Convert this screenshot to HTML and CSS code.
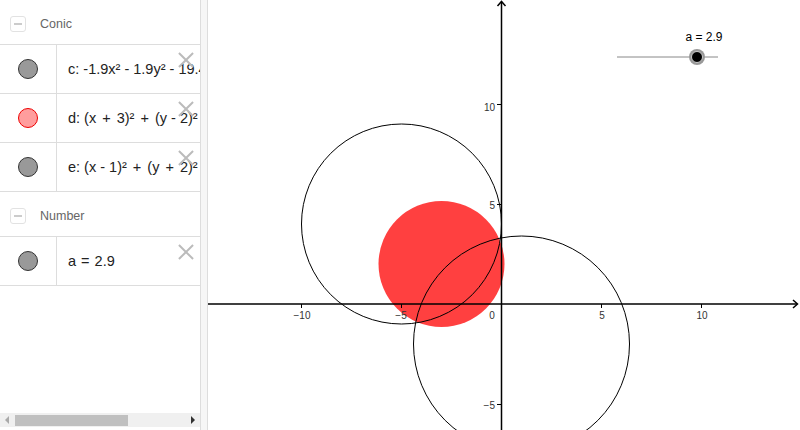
FILE: index.html
```html
<!DOCTYPE html>
<html lang="en">
<head>
    <meta charset="UTF-8">
    <title>Conic circles</title>
    <link rel="stylesheet" href="styles.css">
</head>
<body>

<div class="app">
    <!-- Algebra view -->
    <div class="algebra">
        <div class="group-header">
            <span class="toggle"></span>
            <span class="group-name">Conic</span>
        </div>
        <div class="item">
            <div class="marble-cell"><span class="marble"></span></div>
            <div class="formula">c: -1.9x² - 1.9y² - 19.4x + 15.2y - 3.8 = 0</div>
            <span class="delete"></span>
        </div>
        <div class="item">
            <div class="marble-cell"><span class="marble marble-red"></span></div>
            <div class="formula">d: (x <span class="op">+</span> 3)² <span class="op">+</span> (y - 2)² = 9.61</div>
            <span class="delete"></span>
        </div>
        <div class="item">
            <div class="marble-cell"><span class="marble"></span></div>
            <div class="formula">e: (x - 1)² <span class="op">+</span> (y <span class="op">+</span> 2)² = 29.16</div>
            <span class="delete"></span>
        </div>
        <div class="group-header">
            <span class="toggle"></span>
            <span class="group-name">Number</span>
        </div>
        <div class="item">
            <div class="marble-cell"><span class="marble"></span></div>
            <div class="formula">a <span class="op op-eq">=</span> 2.9</div>
            <span class="delete"></span>
        </div>
        <div class="filler"></div>
        <div class="hscroll">
            <span class="arrow-left"></span>
            <div class="track"><div class="thumb"></div></div>
            <span class="arrow-right"></span>
        </div>
    </div>

    <div class="splitter"></div>

    <!-- Graphics view -->
    <div class="graphics">
        <svg width="592" height="430" viewBox="208 0 592 430">
            <!-- filled circle d -->
            <circle cx="441.5" cy="264" r="63" fill="#ff4040"/>
            <!-- circles c and e -->
            <circle cx="401.5" cy="224" r="100" fill="none" stroke="#000" stroke-width="1"/>
            <circle cx="521.5" cy="344" r="108" fill="none" stroke="#000" stroke-width="1"/>

            <!-- axes -->
            <g stroke="#000" stroke-width="1.5" fill="none">
                <line x1="208" y1="304" x2="797" y2="304"/>
                <polyline points="793,300 797.5,304 793,308"/>
                <line x1="501.5" y1="2" x2="501.5" y2="430"/>
                <polyline points="497.5,6 501.5,1.5 505.5,6"/>
            </g>
            <g stroke="#000" stroke-width="1">
                <line x1="301.5" y1="304" x2="301.5" y2="308"/>
                <line x1="401.5" y1="304" x2="401.5" y2="308"/>
                <line x1="601.5" y1="304" x2="601.5" y2="308"/>
                <line x1="701.5" y1="304" x2="701.5" y2="308"/>
                <line x1="497" y1="104.5" x2="501.5" y2="104.5"/>
                <line x1="497" y1="204.5" x2="501.5" y2="204.5"/>
                <line x1="497" y1="404.5" x2="501.5" y2="404.5"/>
            </g>
            <g class="tick-label">
                <text x="302" y="319" text-anchor="middle">−10</text>
                <text x="401" y="319" text-anchor="middle">−5</text>
                <text x="492" y="319" text-anchor="middle">0</text>
                <text x="602" y="319" text-anchor="middle">5</text>
                <text x="702" y="319" text-anchor="middle">10</text>
                <text x="495" y="111" text-anchor="end">10</text>
                <text x="495" y="209" text-anchor="end">5</text>
                <text x="495" y="409" text-anchor="end">−5</text>
            </g>

            <!-- slider a -->
            <line x1="617" y1="57" x2="718" y2="57" stroke="#888" stroke-width="1"/>
            <circle cx="697" cy="57" r="8" fill="#999"/>
            <circle cx="697" cy="57" r="5.5" fill="#000" stroke="#ccc" stroke-width="1"/>
            <text class="slider-label" x="704" y="41" text-anchor="middle">a = 2.9</text>
        </svg>
    </div>
</div>

</body>
</html>
```

FILE: styles.css
```css
/* Basic page setup */
body {
    margin: 0;
    padding: 0;
    font-family: "Liberation Sans", Arial, sans-serif;
    background-color: #fff;
}

.app {
    display: flex;
    width: 800px;
    height: 430px;
    overflow: hidden;
}

/* Algebra view */
.algebra {
    width: 200px;
    height: 430px;
    display: flex;
    flex-direction: column;
    flex-shrink: 0;
}

.group-header {
    height: 41px;
    padding-top: 3px;
    display: flex;
    align-items: center;
    border-bottom: 1px solid #ddd;
    flex-shrink: 0;
}

.toggle {
    width: 14px;
    height: 14px;
    margin-left: 10px;
    border: 1px solid #e2e2e2;
    border-radius: 3px;
    position: relative;
}

.toggle::after {
    content: "";
    position: absolute;
    left: 3px;
    right: 3px;
    top: 6px;
    height: 2px;
    background-color: #ccc;
}

.group-name {
    margin-left: 14px;
    font-size: 12.5px;
    color: #666;
}

.item {
    height: 48px;
    display: flex;
    border-bottom: 1px solid #ddd;
    position: relative;
    flex-shrink: 0;
}

.marble-cell {
    width: 56px;
    border-right: 1px solid #ddd;
    display: flex;
    align-items: center;
    justify-content: center;
    flex-shrink: 0;
}

.marble {
    width: 18px;
    height: 18px;
    border-radius: 50%;
    background-color: #999;
    border: 1px solid #333;
}

.marble-red {
    background-color: #ff9d9d;
    border-color: #e00;
}

.formula {
    flex: 1;
    padding-left: 11px;
    display: flex;
    align-items: center;
    white-space: pre;
    overflow: hidden;
    font-size: 14.5px;
    color: #222;
}

.op {
    padding: 0 2px;
}

.op-eq {
    padding: 0 1px;
}

.delete {
    position: absolute;
    top: 7px;
    right: 6px;
    width: 16px;
    height: 16px;
}

.delete::before,
.delete::after {
    content: "";
    position: absolute;
    left: -2px;
    top: 7px;
    width: 20px;
    height: 2px;
    background-color: #bbb;
    transform: rotate(45deg);
}

.delete::after {
    transform: rotate(-45deg);
}

.filler {
    flex: 1;
}

/* Horizontal scrollbar */
.hscroll {
    height: 14px;
    margin-bottom: 3px;
    background-color: #f0f0f0;
    display: flex;
    align-items: center;
}

.arrow-left {
    width: 0;
    height: 0;
    margin-left: 5px;
    border-top: 4px solid transparent;
    border-bottom: 4px solid transparent;
    border-right: 4px solid #aaa;
}

.track {
    flex: 1;
    height: 11px;
    margin: 0 6px;
}

.thumb {
    width: 113px;
    height: 11px;
    background-color: #c0c0c0;
}

.arrow-right {
    width: 0;
    height: 0;
    margin-right: 5px;
    border-top: 4px solid transparent;
    border-bottom: 4px solid transparent;
    border-left: 4px solid #333;
}

/* Splitter between views */
.splitter {
    width: 6px;
    background-color: #f6f6f6;
    border-left: 1px solid #ddd;
    border-right: 1px solid #ddd;
    flex-shrink: 0;
}

/* Graphics view */
.graphics {
    flex: 1;
    overflow: hidden;
}

.graphics svg {
    display: block;
}

.tick-label text {
    font-family: "Liberation Sans", Arial, sans-serif;
    font-size: 10px;
    fill: #333;
}

.slider-label {
    font-family: "Liberation Sans", Arial, sans-serif;
    font-size: 12px;
    fill: #000;
}
```
